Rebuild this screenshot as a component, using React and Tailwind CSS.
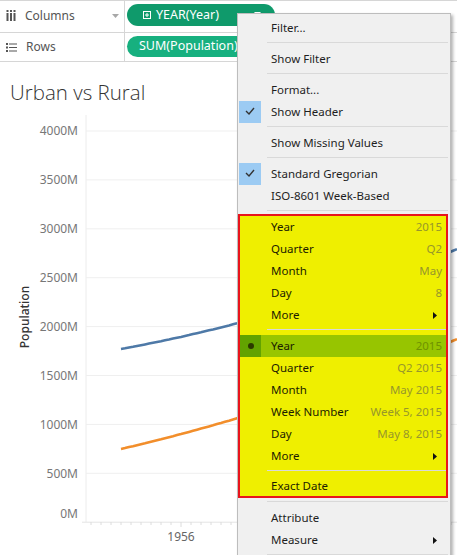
import React from "react";

const blueY = (x) => 349 - 0.1818 * (x - 121) - 0.000343 * (x - 121) ** 2 - 108;
const orangeY = (x) => 449 - 0.2319 * (x - 121) - 0.000283 * (x - 121) ** 2 - 108;

const buildPath = (fn) => {
  let d = "";
  for (let x = 121; x <= 460; x += 4) {
    d += (x === 121 ? "M" : "L") + x + "," + fn(x).toFixed(1) + " ";
  }
  return d;
};

const yLabels = ["4000M", "3500M", "3000M", "2500M", "2000M", "1500M", "1000M", "500M"];

function Check() {
  return (
    <div className="flex h-[22px] w-[22px] items-center justify-center bg-[#9ccbf3]">
      <svg width="10" height="8" viewBox="0 0 10 8" className="-mt-[3px]">
        <path d="M1 4 L4 7 L9 1" fill="none" stroke="#333" strokeWidth="1.4" />
      </svg>
    </div>
  );
}

function Arrow() {
  return (
    <svg width="4" height="7" viewBox="0 0 4 7">
      <polygon points="0,0 4,3.5 0,7" fill="#111" />
    </svg>
  );
}

function Item({ label, value, arrow, check, inBox, last }) {
  return (
    <div className={`flex items-center ${last ? "h-[20px]" : "h-[22px]"}`}>
      <div className={inBox ? "w-[21px]" : "ml-[1px] w-[22px]"}>{check && <Check />}</div>
      <span className={`ml-[10px] flex-1 ${inBox ? "text-[#1c1c00]" : "text-[#1e1e1e]"}`}>{label}</span>
      {value && <span className="pr-[4px] text-[#97972a]">{value}</span>}
      {arrow && (
        <span className={inBox ? "pr-[9px]" : "pr-[13px]"}>
          <Arrow />
        </span>
      )}
    </div>
  );
}

function Sep({ inBox, short }) {
  return (
    <div className={`${short ? "h-[7px]" : "h-[9px]"} pt-[3px] ${inBox ? "ml-[27px]" : "ml-[29px] mr-[2px]"}`}>
      <div className="h-px bg-[#d9d9d9]" />
    </div>
  );
}

function ContextMenu() {
  return (
    <div className="absolute left-[237px] top-[13px] w-[214px] border border-[#bdbdbd] bg-[#f0f0f0] pt-[3px] pb-[20px] text-[11.5px] font-['Noto_Sans',sans-serif] shadow-[2px_2px_3px_rgba(0,0,0,0.3)]">
      <Item label="Filter..." />
      <Sep />
      <Item label="Show Filter" />
      <Sep />
      <Item label="Format..." />
      <Item label="Show Header" check />
      <Sep />
      <Item label="Show Missing Values" />
      <Sep />
      <Item label="Standard Gregorian" check />
      <Item label="ISO-8601 Week-Based" />
      <Sep short />
      <div className="mr-[2px] border-2 border-[#e8141c] bg-[#efef00]">
        <Item inBox label="Year" value="2015" />
        <Item inBox label="Quarter" value="Q2" />
        <Item inBox label="Month" value="May" />
        <Item inBox label="Day" value="8" />
        <Item inBox label="More" arrow />
        <Sep inBox />
        <div className="flex h-[22px] items-center bg-[#97c500]">
          <div className="flex h-[22px] w-[21px] items-center justify-center bg-[#62a300]">
            <div className="h-[6px] w-[6px] rounded-full bg-[#2c3a00]" />
          </div>
          <span className="ml-[10px] flex-1 text-[#1c1c00]">Year</span>
          <span className="pr-[4px] text-[#6f9200]">2015</span>
        </div>
        <Item inBox label="Quarter" value="Q2 2015" />
        <Item inBox label="Month" value="May 2015" />
        <Item inBox label="Week Number" value="Week 5, 2015" />
        <Item inBox label="Day" value="May 8, 2015" />
        <Item inBox label="More" arrow />
        <Sep inBox />
        <Item inBox label="Exact Date" last />
      </div>
      <Sep />
      <Item label="Attribute" />
      <Item label="Measure" arrow />
      <Sep />
    </div>
  );
}

function Shelves() {
  return (
    <div className="font-['Noto_Sans',sans-serif] text-[12px]">
      <div className="flex h-[33px] border-y border-[#d6d6d6]">
        <div className="flex w-[125px] items-center border-r border-[#d6d6d6] pb-[2px]">
          <svg width="10" height="11" viewBox="0 0 10 11" className="ml-[6px]">
            <rect x="0.5" y="0" width="2" height="2" fill="#555" />
            <rect x="0.5" y="3" width="2" height="8" fill="#555" />
            <rect x="4" y="0" width="2" height="2" fill="#555" />
            <rect x="4" y="3" width="2" height="8" fill="#555" />
            <rect x="7.5" y="0" width="2" height="2" fill="#555" />
            <rect x="7.5" y="3" width="2" height="8" fill="#555" />
          </svg>
          <span className="ml-[9px] text-[#555]">Columns</span>
          <svg width="7" height="4" viewBox="0 0 7 4" className="ml-[37px]">
            <polygon points="0,0 7,0 3.5,4" fill="#a8a8a8" />
          </svg>
        </div>
        <div className="pl-[2px] pt-[3px]">
          <div className="flex h-[22px] w-[148px] items-center rounded-full bg-[#0f9a6b] pl-[16px] text-[12.5px] text-white">
            <svg width="8" height="8" viewBox="0 0 8 8">
              <rect x="0.5" y="0.5" width="7" height="7" fill="none" stroke="#fff" />
              <path d="M4 2 V6 M2 4 H6" stroke="#fff" />
            </svg>
            <span className="ml-[5px] flex-1">YEAR(Year)</span>
            <svg width="7" height="4" viewBox="0 0 7 4" className="mr-[14px] -mt-[2px]">
              <polygon points="0,0 7,0 3.5,4" fill="#fff" />
            </svg>
          </div>
        </div>
      </div>
      <div className="flex h-[29px] border-b border-[#d6d6d6]">
        <div className="flex w-[125px] items-center border-r border-[#d6d6d6]">
          <svg width="11" height="9" viewBox="0 0 11 9" className="ml-[6px]">
            <rect x="0" y="0" width="2" height="2" fill="#555" />
            <rect x="3" y="0.5" width="8" height="1" fill="#555" />
            <rect x="0" y="3.5" width="2" height="2" fill="#555" />
            <rect x="3" y="4" width="8" height="1" fill="#555" />
            <rect x="0" y="7" width="2" height="2" fill="#555" />
            <rect x="3" y="7.5" width="8" height="1" fill="#555" />
          </svg>
          <span className="ml-[9px] text-[#555]">Rows</span>
        </div>
        <div className="pl-[2px] pt-[3px]">
          <div className="flex h-[21px] items-center rounded-full bg-[#17b07f] px-[12px] text-[12.5px] text-white">
            SUM(Population)
          </div>
        </div>
      </div>
    </div>
  );
}

function Chart() {
  const ticks = [];
  for (let x = 91; x <= 457; x += 10) ticks.push(x);
  return (
    <svg width="457" height="447" className="block font-['Noto_Sans',sans-serif]">
      <line x1="86" y1="7" x2="86" y2="414" stroke="#ececec" />
      {yLabels.map((l, i) => {
        const y = 23 + 48.9 * i;
        return (
          <g key={l}>
            <line x1="86" y1={y} x2="457" y2={y} stroke="#efefef" />
            <text x="78" y={y} dy="0.36em" textAnchor="end" fontSize="12" fill="#777">
              {l}
            </text>
          </g>
        );
      })}
      <line x1="82" y1="414.2" x2="457" y2="414.2" stroke="#e4e4e4" />
      <text x="78" y="406" dy="0.36em" textAnchor="end" fontSize="12" fill="#777">
        0M
      </text>
      {ticks.map((x) => (
        <line key={x} x1={x} y1="414" x2={x} y2={x === 181 ? 419 : 417} stroke="#dcdcdc" />
      ))}
      <text x="181" y="429" dy="0.36em" textAnchor="middle" fontSize="12" fill="#666">
        1956
      </text>
      <text
        x="25"
        y="209"
        dy="0.36em"
        textAnchor="middle"
        fontSize="12"
        fontWeight="500"
        fill="#333"
        transform="rotate(-90 25 209)"
      >
        Population
      </text>
      <path d={buildPath(blueY)} fill="none" stroke="#4e79a7" strokeWidth="2.6" />
      <path d={buildPath(orangeY)} fill="none" stroke="#f28e2b" strokeWidth="2.6" />
    </svg>
  );
}

export default function App() {
  return (
    <div className="relative h-[555px] w-[457px] overflow-hidden bg-white">
      <Shelves />
      <div className="h-[46px] pl-[10px] pt-[17px] text-[20.5px] leading-[26px] font-light text-[#333] font-['Open_Sans',sans-serif]">
        Urban vs Rural
      </div>
      <Chart />
      <ContextMenu />
    </div>
  );
}
